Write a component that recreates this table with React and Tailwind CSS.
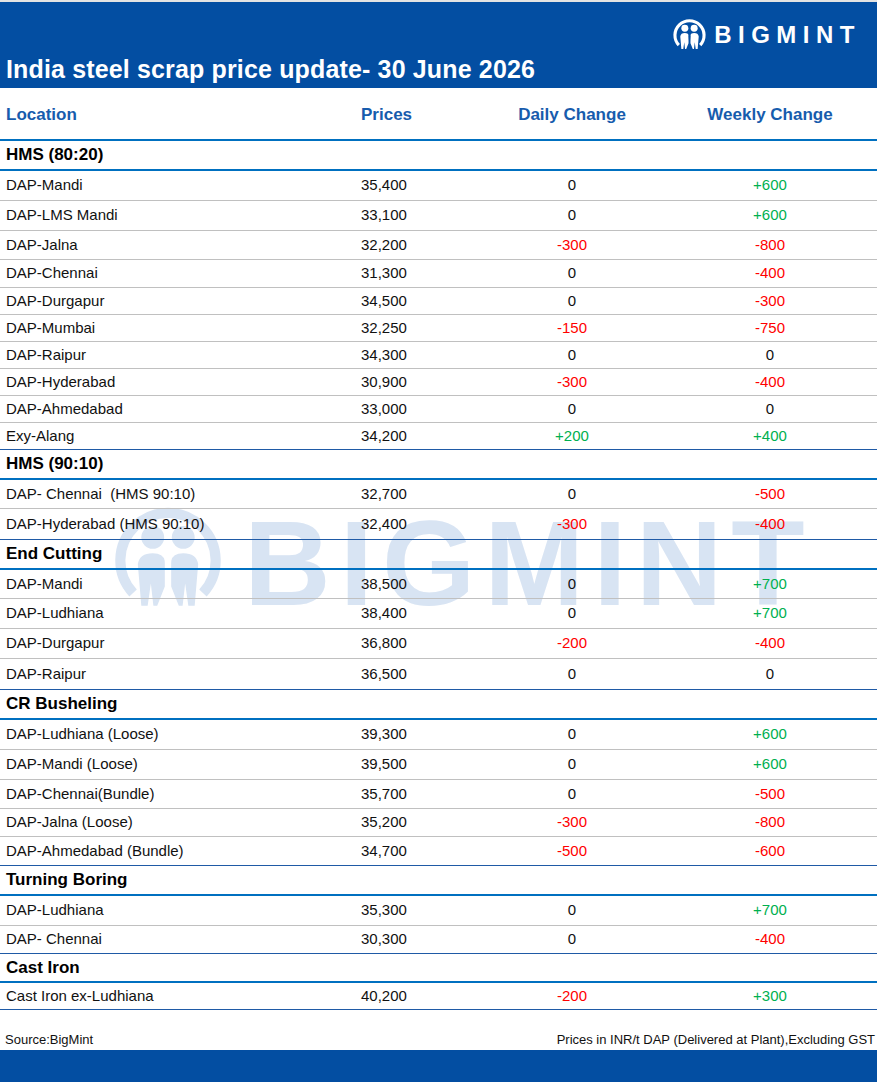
import React from "react";

const groups = [
  {
    name: "HMS (80:20)",
    h: 30,
    rows: [
      ["DAP-Mandi", "35,400", "0", "+600", 30],
      ["DAP-LMS Mandi", "33,100", "0", "+600", 30],
      ["DAP-Jalna", "32,200", "-300", "-800", 29],
      ["DAP-Chennai", "31,300", "0", "-400", 28],
      ["DAP-Durgapur", "34,500", "0", "-300", 27],
      ["DAP-Mumbai", "32,250", "-150", "-750", 27],
      ["DAP-Raipur", "34,300", "0", "0", 27],
      ["DAP-Hyderabad", "30,900", "-300", "-400", 27],
      ["DAP-Ahmedabad", "33,000", "0", "0", 27],
      ["Exy-Alang", "34,200", "+200", "+400", 27],
    ],
  },
  {
    name: "HMS (90:10)",
    h: 30,
    rows: [
      ["DAP- Chennai  (HMS 90:10)", "32,700", "0", "-500", 29],
      ["DAP-Hyderabad (HMS 90:10)", "32,400", "-300", "-400", 31],
    ],
  },
  {
    name: "End Cutting",
    h: 30,
    rows: [
      ["DAP-Mandi", "38,500", "0", "+700", 29],
      ["DAP-Ludhiana", "38,400", "0", "+700", 30],
      ["DAP-Durgapur", "36,800", "-200", "-400", 30],
      ["DAP-Raipur", "36,500", "0", "0", 31],
    ],
  },
  {
    name: "CR Busheling",
    h: 30,
    rows: [
      ["DAP-Ludhiana (Loose)", "39,300", "0", "+600", 30],
      ["DAP-Mandi (Loose)", "39,500", "0", "+600", 30],
      ["DAP-Chennai(Bundle)", "35,700", "0", "-500", 29],
      ["DAP-Jalna (Loose)", "35,200", "-300", "-800", 28],
      ["DAP-Ahmedabad (Bundle)", "34,700", "-500", "-600", 29],
    ],
  },
  {
    name: "Turning Boring",
    h: 30,
    rows: [
      ["DAP-Ludhiana", "35,300", "0", "+700", 30],
      ["DAP- Chennai", "30,300", "0", "-400", 28],
    ],
  },
  {
    name: "Cast Iron",
    h: 29,
    rows: [["Cast Iron ex-Ludhiana", "40,200", "-200", "+300", 27]],
  },
];

const tone = (v) =>
  v.startsWith("+") ? "text-[#00b050]" : v.startsWith("-") ? "text-[#ff0000]" : "text-[#111]";

const cols = "grid grid-cols-[355px_115px_204px_192px] items-center";

// two-figure roundel used in the header and the watermark
const Roundel = ({ className, fill, bg }) => (
  <svg viewBox="0 0 34 36" className={className}>
    <path d="M6 29 A15 15 0 1 1 28 29" fill="none" stroke={fill} strokeWidth="3.2" />
    <circle cx="12.2" cy="11.5" r="3.6" fill={fill} />
    <circle cx="21.8" cy="11.5" r="3.6" fill={fill} />
    <path d="M7.5 20 Q8 16.5 12.2 16.5 Q15.6 16.5 16 19 L16 27 L13.6 33 L12.4 33 L11.6 26 L10.6 33 L8.6 33 Z" fill={fill} />
    <path d="M26.5 20 Q26 16.5 21.8 16.5 Q18.4 16.5 18 19 L18 27 L20.4 33 L21.6 33 L22.4 26 L23.4 33 L25.4 33 Z" fill={fill} />
    <path d="M16 19 L17 30 L18 19 Z" fill={bg} />
  </svg>
);

export default function App() {
  return (
    <div className="relative w-[877px] bg-white text-[#111]" style={{ fontFamily: '"Liberation Sans", Arial, sans-serif' }}>
      {/* Watermark */}
      <div className="absolute left-0 top-[488px] w-[877px] h-[140px] pointer-events-none">
        <Roundel className="absolute left-[114px] top-[2px] w-[108px] h-[136px]" fill="#d8e4f3" bg="#ffffff" />
        <svg className="absolute left-0 top-0" width="877" height="140">
          <text x="244" y="117" fontSize="120" fontWeight="700" fill="#d8e4f3" letterSpacing="9" fontFamily="Liberation Sans, Arial, sans-serif">
            BIGMINT
          </text>
        </svg>
      </div>

      <div className="relative">
        <div className="h-[2px] bg-[#e3e3e3]" />
        {/* Title band */}
        <div className="h-[86px] bg-[#034ea2] flex flex-col justify-between pt-[15px] pb-[4px] px-[6px]">
          <div className="flex justify-end items-center gap-[8px] pr-[10px]">
            <Roundel className="w-[33px] h-[35px]" fill="#ffffff" bg="#034ea2" />
            <span className="text-white font-bold text-[24px] tracking-[6.5px] leading-none">BIGMINT</span>
          </div>
          <div className="text-white font-bold text-[25px] tracking-[0.15px] leading-[30px]">
            India steel scrap price update- 30 June 2026
          </div>
        </div>

        {/* Column headings */}
        <div className={`${cols} h-[53px] border-b-2 border-[#0070c0] text-[17px] font-bold text-[#175cad]`}>
          <div className="pl-[6px] pt-[2px]">Location</div>
          <div className="pl-[6px] pt-[2px]">Prices</div>
          <div className="text-center pt-[2px]">Daily Change</div>
          <div className="text-center pt-[2px]">Weekly Change</div>
        </div>

        {groups.map((g) => (
          <div key={g.name}>
            <div
              className="flex items-center pl-[6px] border-b-2 border-[#0070c0] text-[17px] font-bold text-black"
              style={{ height: g.h }}
            >
              {g.name}
            </div>
            {g.rows.map((r, i) => (
              <div
                key={r[0] + i}
                className={`${cols} text-[15px] border-b ${i === g.rows.length - 1 ? "border-[#1f5aa6]" : "border-[#c0c0c0]"}`}
                style={{ height: r[4] }}
              >
                <div className="pl-[6px] whitespace-pre">{r[0]}</div>
                <div className="pl-[6px]">{r[1]}</div>
                <div className={`text-center ${tone(r[2])}`}>{r[2]}</div>
                <div className={`text-center ${tone(r[3])}`}>{r[3]}</div>
              </div>
            ))}
          </div>
        ))}

        {/* Footer */}
        <div className="h-[40px] flex items-end justify-between pl-[5px] pr-[2px] pb-[1px] text-[13px] text-[#111]">
          <span>Source:BigMint</span>
          <span>Prices in INR/t DAP (Delivered at Plant),Excluding GST</span>
        </div>
        <div className="h-[32px] bg-[#034ea2]" />
      </div>
    </div>
  );
}
